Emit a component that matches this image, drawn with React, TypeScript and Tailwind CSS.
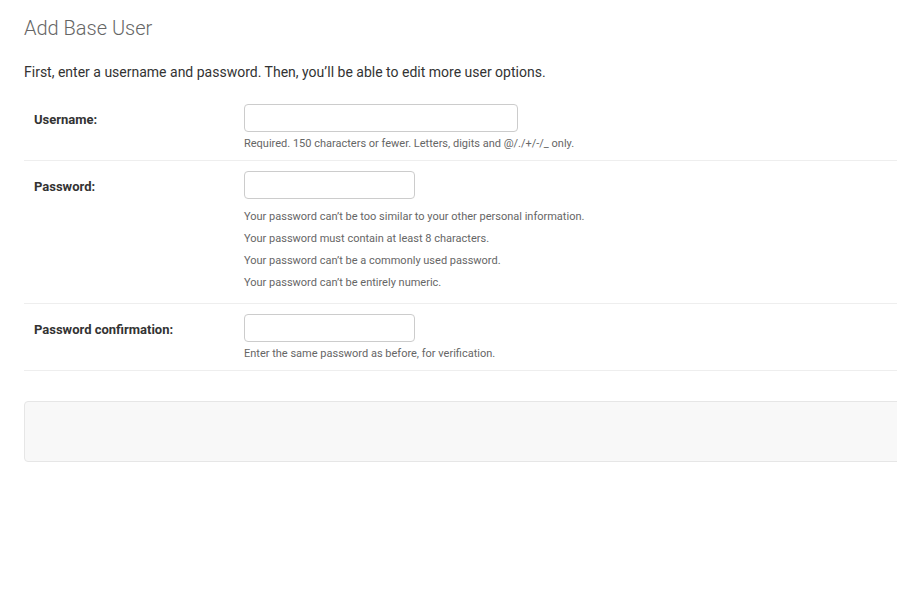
import React from "react";

const rows = [
  {
    label: "Username:",
    width: "w-[274px]",
    help: ["Required. 150 characters or fewer. Letters, digits and @/./+/-/_ only."],
  },
  {
    label: "Password:",
    width: "w-[171px]",
    list: [
      "Your password can’t be too similar to your other personal information.",
      "Your password must contain at least 8 characters.",
      "Your password can’t be a commonly used password.",
      "Your password can’t be entirely numeric.",
    ],
  },
  {
    label: "Password confirmation:",
    width: "w-[171px]",
    help: ["Enter the same password as before, for verification."],
  },
];

const FormRow = ({ row }: { row: (typeof rows)[0] & { list?: string[] } }) => {
  return (
    <div className={`flex border-b border-[#eee] pl-[10px] pt-[10px] ${row.list ? "pb-[9px]" : "pb-[8px]"}`}>
      <label className="w-[210px] shrink-0 pt-[8px] text-[13px] font-bold leading-[16px] text-[#333]">
        {row.label}
      </label>
      <div>
        <input
          type="text"
          className={`${row.width} block h-[28px] rounded-[4px] border border-[#ccc] bg-white px-[6px] text-[13px] outline-none`}
        />
        {row.help?.map((h, i) => (
          <div key={i} className="mt-[4px] text-[11px] leading-[16px] text-[#666]">
            {h}
          </div>
        ))}
        {row.list && (
          <ul className="mt-[7px]">
            {row.list.map((item, i) => (
              <li key={i} className="h-[22px] text-[11px] leading-[22px] text-[#666]">
                {item}
              </li>
            ))}
          </ul>
        )}
      </div>
    </div>
  );
};

export default function App() {
  return (
    <div className="min-h-[603px] w-full overflow-hidden bg-white font-['Roboto',sans-serif]">
      <div className="ml-[24px] w-[890px] pt-[16px]">
        <h1 className="text-[20px] font-light leading-[24px] text-[#666]">Add Base User</h1>
        <p className="mt-[22px] text-[14px] leading-[20px] text-[#333]">
          First, enter a username and password. Then, you’ll be able to edit more user options.
        </p>
        <div className="mt-[12px]">
          {rows.map((row, i) => (
            <FormRow row={row} key={i} />
          ))}
        </div>
        <div className="mt-[30px] h-[61px] rounded-[4px] border border-[#e6e6e6] bg-[#f8f8f8]" />
      </div>
    </div>
  );
}
